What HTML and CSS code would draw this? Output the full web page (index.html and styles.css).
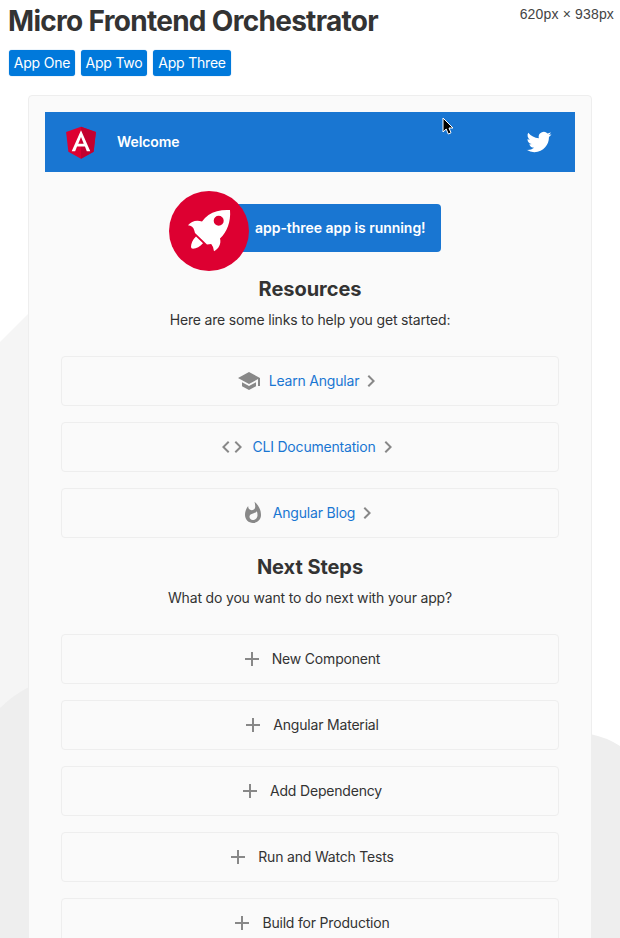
FILE: index.html
```html
<!DOCTYPE html>
<html lang="en">
<head>
<meta charset="utf-8">
<title>Micro Frontend Orchestrator</title>
<link rel="stylesheet" href="styles.css">
</head>
<body>
<svg class="backdrop" viewBox="0 0 620 938" aria-hidden="true">
  <path fill="#f5f5f5" d="M0 342L29 313V938H0z"/>
  <path fill="#eee" d="M0 708Q13 695 29 687V938H0zM590 734Q606 737 620 746V938H590z"/>
</svg>
<svg class="symbols" aria-hidden="true">
  <symbol id="plus" viewBox="0 0 24 24"><path d="M19 13h-6v6h-2v-6H5v-2h6V5h2v6h6v2z"/></symbol>
  <symbol id="chevron" viewBox="0 0 24 24"><path d="M10 6L8.59 7.41 13.17 12l-4.58 4.59L10 18l6-6z"/></symbol>
</svg>
<header class="top">
  <h1>Micro Frontend Orchestrator</h1>
  <nav class="apps"><button class="one">App One</button><button class="two">App Two</button><button class="three">App Three</button></nav>
</header>
<div class="viewport-size">620px × 938px</div>
<main class="panel">
  <div class="toolbar">
    <svg class="logo" viewBox="0 0 250 250"><path fill="#dd0031" d="M125 30L31.9 63.2l14.2 123.1L125 230l78.9-43.7 14.2-123.1z"/><path fill="#c3002f" d="M125 30v200l78.9-43.7 14.2-123.1z"/><path fill="#fff" d="M125 52.1L66.8 182.6h21.7l11.7-29.2h49.4l11.7 29.2H183L125 52.1zm17 83.3h-34l17-40.9z"/></svg>
    <span class="welcome">Welcome</span>
    <svg class="twitter" viewBox="0 0 400 400"><path fill="#fff" d="M153.62,301.59c94.34,0,145.94-78.16,145.94-145.94,0-2.22,0-4.43-.15-6.63A104.36,104.36,0,0,0,325,122.47a102.38,102.38,0,0,1-29.46,8.07,51.47,51.47,0,0,0,22.55-28.37,102.79,102.79,0,0,1-32.57,12.45,51.34,51.34,0,0,0-87.41,46.78A145.62,145.62,0,0,1,92.4,107.81a51.33,51.33,0,0,0,15.88,68.47A50.91,50.91,0,0,1,85,169.86c0,.21,0,.43,0,.65a51.31,51.31,0,0,0,41.15,50.28,51.21,51.21,0,0,1-23.16.88,51.35,51.35,0,0,0,47.92,35.62,102.92,102.92,0,0,1-63.7,22A104.41,104.41,0,0,1,75,278.55a145.21,145.21,0,0,0,78.62,23"/></svg>
  </div>
  <div class="hero">
    <svg class="rocket" viewBox="0 0 80 80"><circle cx="40" cy="40" r="40" fill="#dd0031"/><path fill="#fff" fill-rule="evenodd" d="M61 19C53 18.500 45 20 39.500 24Q36 26.500 33 30.500C28 28.500 22 30 19 34.300Q24 34.500 25.300 39.500L26 42 38 53.500 42.200 53Q44.500 55.500 45 60.300C49.500 58 52.500 53 51 47.500C58 41 62 31 61 19ZM49.700 24.800a5 5 0 1 1 0 10 5 5 0 0 1 0-10ZM27 45.500C23.500 48.500 22 53 22 56Q22 57.800 24 57.800C27.500 57.500 31 55.500 34 52.200Z"/></svg>
    <div class="status"><span>app-three app is running!</span></div>
  </div>
  <h2>Resources</h2>
  <p>Here are some links to help you get started:</p>
  <div class="cards links">
    <a class="card"><svg viewBox="0 0 24 24"><path d="M5 13.18v4L12 21l7-3.82v-4L12 17l-7-3.82zM12 3L1 9l11 6 9-4.91V17h2V9L12 3z"/></svg><span>Learn Angular</span><svg><use href="#chevron"/></svg></a>
    <a class="card"><svg viewBox="0 0 24 24"><path d="M9.400 16.600L4.800 12l4.600-4.600L8 6l-6 6 6 6 1.400-1.400zm5.200 0l4.600-4.600-4.600-4.600L16 6l6 6-6 6-1.400-1.400z"/></svg><span>CLI Documentation</span><svg><use href="#chevron"/></svg></a>
    <a class="card"><svg viewBox="0 0 24 24"><path d="M13.500.67s.74 2.650.74 4.800c0 2.060-1.350 3.730-3.410 3.730-2.070 0-3.630-1.670-3.630-3.730l.03-.36C5.210 7.510 4 10.620 4 14c0 4.420 3.580 8 8 8s8-3.580 8-8C20 8.610 17.410 3.800 13.500.67zM11.710 19c-1.780 0-3.220-1.400-3.220-3.140 0-1.620 1.050-2.760 2.810-3.120 1.770-.36 3.600-1.210 4.620-2.580.39 1.290.59 2.650.59 4.040 0 2.650-2.150 4.800-4.800 4.800z"/></svg><span>Angular Blog</span><svg><use href="#chevron"/></svg></a>
  </div>
  <h2 class="next">Next Steps</h2>
  <p>What do you want to do next with your app?</p>
  <div class="cards">
    <div class="card"><svg><use href="#plus"/></svg><span>New Component</span></div>
    <div class="card"><svg><use href="#plus"/></svg><span>Angular Material</span></div>
    <div class="card"><svg><use href="#plus"/></svg><span>Add Dependency</span></div>
    <div class="card"><svg><use href="#plus"/></svg><span>Run and Watch Tests</span></div>
    <div class="card"><svg><use href="#plus"/></svg><span>Build for Production</span></div>
  </div>
</main>
<svg class="cursor" viewBox="0 0 12 19"><path d="M1 1V15L4.200 12 6.300 17 9 15.800 7 11H11z" fill="#000" stroke="#fff"/></svg>
</body>
</html>
```
FILE: styles.css
```css
* { box-sizing: border-box; }
html { height: 938px; overflow: hidden; }
body {
  margin: 0;
  height: 938px;
  overflow: hidden;
  position: relative;
  background: #fff;
  color: #333;
  font: 14px/20px Inter, sans-serif;
}
.backdrop { position: absolute; inset: 0; width: 620px; height: 938px; z-index: -1; }
.symbols { position: absolute; width: 0; height: 0; }
.top { padding: 4px 8px 0 9px; height: 95.400px; }
h1 { margin: 0 0 0 -1px; font-size: 28px; line-height: 34px; font-weight: 700; letter-spacing: -0.7px; white-space: nowrap; }
.apps { display: flex; gap: 6px; margin-top: 12px; }
.apps button {
  height: 26px;
  padding: 0;
  border: 0;
  border-radius: 3px;
  background: #0079db;
  color: #fff;
  font: 14px/26px Inter, sans-serif;
  letter-spacing: -0.2px;
  box-shadow: 0 0 1px #4799df;
}
.one, .two { width: 66px; }
.three { width: 78px; }
.viewport-size { position: absolute; right: 6px; top: 4px; font-family: "Liberation Sans", sans-serif; letter-spacing: 0.16px; color: #444; }
.panel {
  width: 564px;
  height: 860px;
  margin: 0 auto;
  padding: 16px;
  border: 1px solid #eee;
  border-radius: 4px;
  background: #fafafa;
  text-align: center;
}
.toolbar { display: flex; align-items: center; height: 60px; margin-top: -0.400px; padding: 0 16px; background: #1976d2; color: #fff; font-weight: 600; letter-spacing: -0.1px; }
.toolbar svg { width: 40px; height: 40px; }
.welcome { margin-left: 16px; margin-right: auto; }
.hero { display: flex; align-items: center; width: 272px; height: 80px; margin: 18.500px auto 0 124px; }
.rocket { flex: none; width: 80px; height: 80px; position: relative; z-index: 1; }
.status { height: 48px; margin: -5px 0 0 -20px; width: 212px; padding-left: 26px; border-radius: 4px; background: #1976d2; color: #fff; font-weight: 600; line-height: 48px; letter-spacing: -0.04px; text-align: left; white-space: nowrap; }
h2 { margin: 6.500px 0 0; font-size: 20px; line-height: 24px; font-weight: 700; letter-spacing: -0.05px; }
p { margin: 9px 0 0; letter-spacing: -0.17px; }
.cards { display: grid; gap: 16px; margin: 26px 16px 0; }
.card { display: flex; align-items: center; justify-content: center; height: 50px; border: 1px solid #eee; border-radius: 4px; background: #fafafa; letter-spacing: -0.19px; }
.card svg { width: 24px; height: 24px; fill: #888; flex: none; }
.card span { margin-left: 8px; }
.links .card span { color: #1976d2; }
.next { margin-top: 17px; }
.cursor { position: absolute; left: 442px; top: 117px; width: 12px; height: 19px; }
```
